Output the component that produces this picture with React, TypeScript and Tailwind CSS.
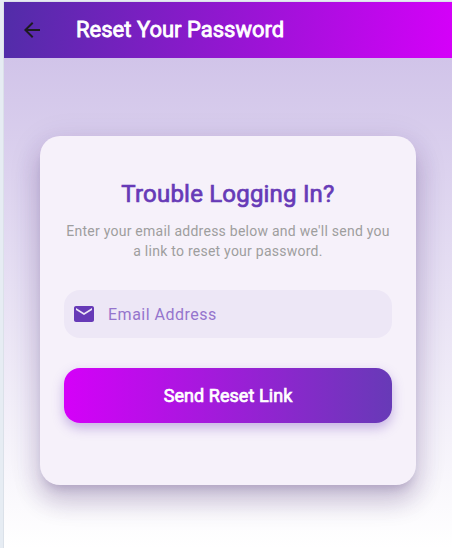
import React from "react";
import { MdArrowBack, MdEmail } from "react-icons/md";

export default function App() {
  return (
    <div className="h-[548px] w-[452px] overflow-hidden bg-[#e6ecf3] pl-1 pt-0.5 font-['Roboto',sans-serif]">
      <div className="flex h-[546px] flex-col shadow-[0_0_1px_rgba(60,60,90,0.35)]">
        <header className="flex h-14 shrink-0 items-center bg-[linear-gradient(97deg,#512da8,#d500f9)] pl-4">
          <button className="flex size-6 items-center justify-center text-[#1d1b20]" aria-label="Back">
            <MdArrowBack size={24} />
          </button>
          <h1 className="ml-8 whitespace-nowrap text-[22px] leading-7 text-white [-webkit-text-stroke:0.8px_#fff]">
            Reset Your Password
          </h1>
        </header>
        <main className="flex flex-1 flex-col bg-[linear-gradient(to_bottom,#d1c4e9,#ffffff)] px-9 pt-[78.4px]">
          <section className="flex h-[349px] flex-col rounded-[20px] bg-[#f6f1fa] px-6 pt-[40.5px] shadow-[0_8px_10px_-5px_rgba(60,30,100,0.2),0_16px_24px_2px_rgba(60,30,100,0.2),0_6px_30px_5px_rgba(60,30,110,0.08)]">
            <h2 className="text-center text-[24px] leading-[34px] tracking-[0.2px] text-[#673ab7] [-webkit-text-stroke:0.7px_#673ab7]">
              Trouble Logging In?
            </h2>
            <p className="mt-[10px] whitespace-nowrap text-center text-[14px] leading-5 tracking-[0.25px] text-[#9e9e9e]">
              Enter your email address below and we'll send you
              <br />a link to reset your password.
            </p>
            <label className="mt-[29.2px] flex h-12 items-center rounded-[16px] bg-[#ede7f6] pl-2 text-[#673ab7]">
              <MdEmail size={24} />
              <span className="ml-3 pt-px text-[16px] tracking-[0.5px] text-[#9575cd]">Email Address</span>
            </label>
            <button className="mt-[30px] flex h-[55px] shrink-0 items-center justify-center rounded-[16px] bg-[linear-gradient(to_right,#d500f9,#673ab7)] text-[18px] tracking-[0.06px] text-white shadow-[0_5px_12px_rgba(103,58,183,0.35)] [-webkit-text-stroke:0.7px_#fff]">
              Send Reset Link
            </button>
          </section>
        </main>
      </div>
    </div>
  );
}
